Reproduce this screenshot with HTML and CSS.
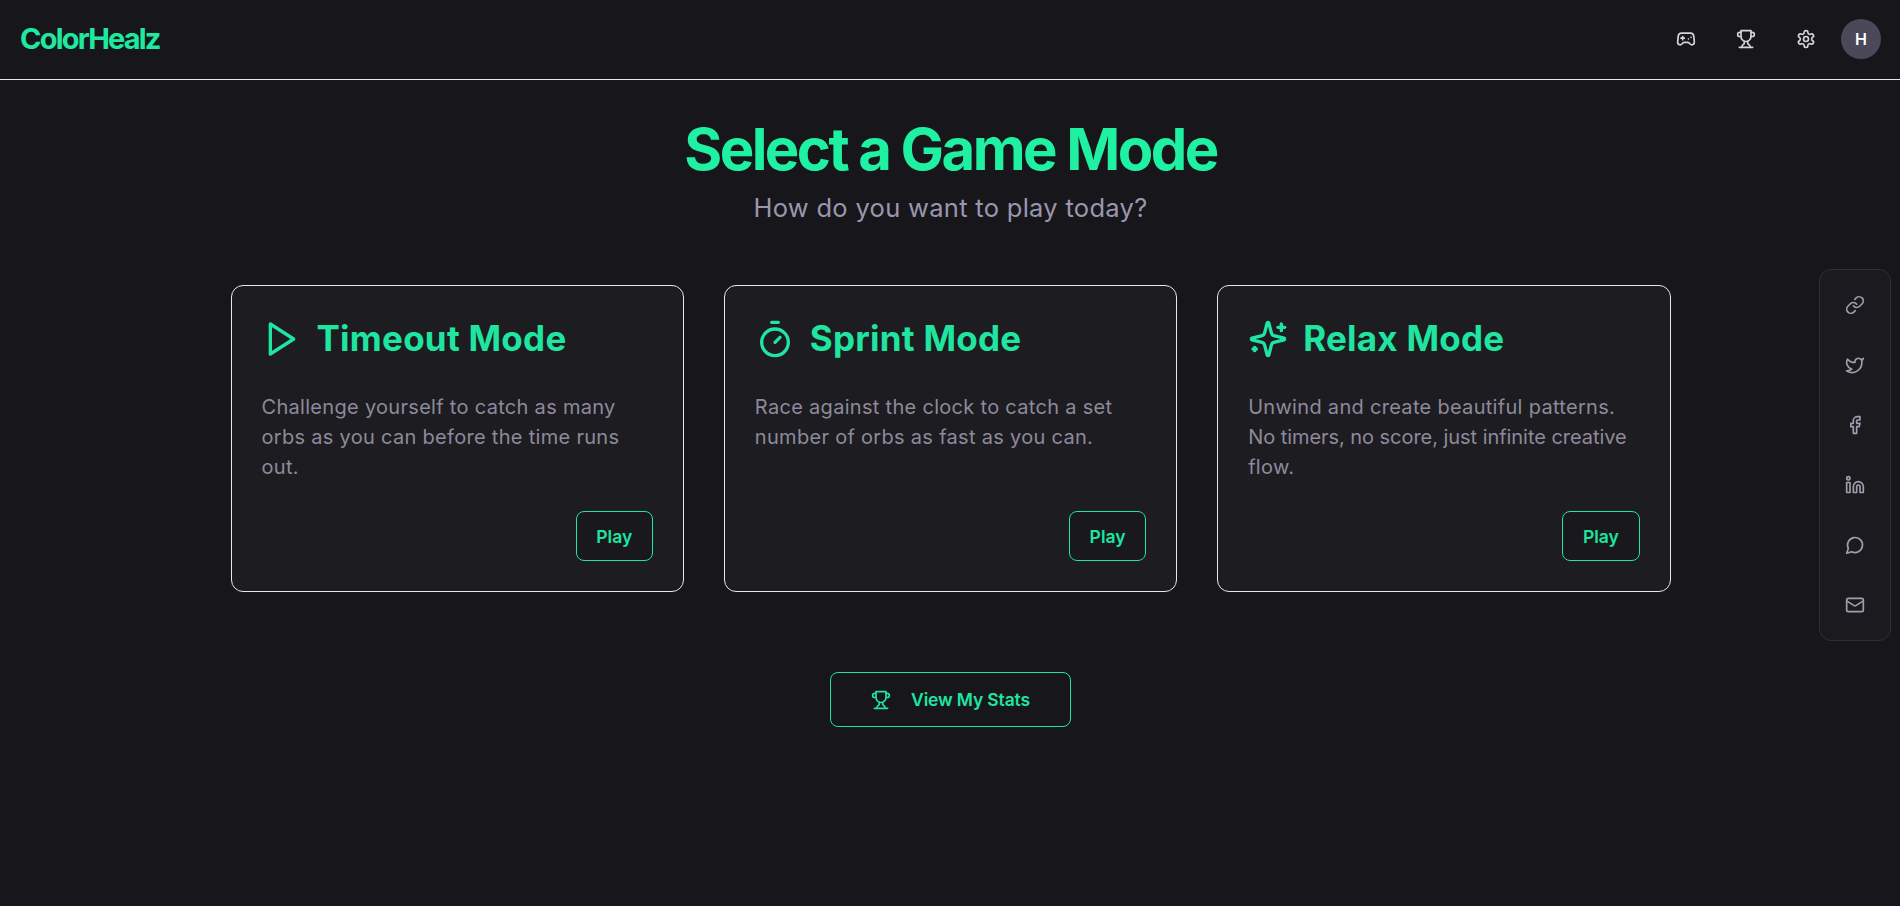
FILE: index.html
```html
<!DOCTYPE html>
<html lang="en">
<head>
<meta charset="utf-8">
<title>ColorHealz</title>
<link rel="stylesheet" href="styles.css">
</head>
<body>
<svg class="sprite" width="0" height="0" aria-hidden="true">
  <symbol id="i-trophy" viewBox="0 0 24 24"><path d="M6 9H4.5a2.5 2.5 0 0 1 0-5H6"/><path d="M18 9h1.5a2.5 2.5 0 0 0 0-5H18"/><path d="M4 22h16"/><path d="M10 14.66V17c0 .55-.47.98-.97 1.21C7.85 18.75 7 20.24 7 22"/><path d="M14 14.66V17c0 .55.47.98.97 1.21C16.15 18.75 17 20.24 17 22"/><path d="M18 2H6v7a6 6 0 0 0 12 0V2Z"/></symbol>
</svg>
<header class="topbar">
  <a class="logo">ColorHealz</a>
  <nav class="topnav">
    <button class="navbtn"><svg class="icon i20" viewBox="0 0 24 24"><line x1="6" x2="10" y1="11" y2="11"/><line x1="8" x2="8" y1="9" y2="13"/><line x1="15" x2="15.01" y1="12" y2="12"/><line x1="18" x2="18.01" y1="10" y2="10"/><path d="M17.32 5H6.68a4 4 0 0 0-3.978 3.59c-.006.052-.01.101-.017.152C2.604 9.416 2 14.456 2 16a3 3 0 0 0 3 3c1 0 1.5-.5 2-1l1.414-1.414A2 2 0 0 1 9.828 16h4.344a2 2 0 0 1 1.414.586L17 18c.5.5 1 1 2 1a3 3 0 0 0 3-3c0-1.545-.604-6.584-.685-7.258-.007-.05-.011-.1-.017-.151A4 4 0 0 0 17.32 5z"/></svg></button>
    <button class="navbtn"><svg class="icon i20"><use href="#i-trophy"/></svg></button>
    <button class="navbtn"><svg class="icon i20" viewBox="0 0 24 24"><path d="M12.22 2h-.44a2 2 0 0 0-2 2v.18a2 2 0 0 1-1 1.73l-.43.25a2 2 0 0 1-2 0l-.15-.08a2 2 0 0 0-2.73.73l-.22.38a2 2 0 0 0 .73 2.73l.15.1a2 2 0 0 1 1 1.72v.51a2 2 0 0 1-1 1.74l-.15.09a2 2 0 0 0-.73 2.73l.22.38a2 2 0 0 0 2.73.73l.15-.08a2 2 0 0 1 2 0l.43.25a2 2 0 0 1 1 1.73V20a2 2 0 0 0 2 2h.44a2 2 0 0 0 2-2v-.18a2 2 0 0 1 1-1.73l.43-.25a2 2 0 0 1 2 0l.15.08a2 2 0 0 0 2.73-.73l.22-.39a2 2 0 0 0-.73-2.73l-.15-.08a2 2 0 0 1-1-1.74v-.5a2 2 0 0 1 1-1.74l.15-.09a2 2 0 0 0 .73-2.73l-.22-.38a2 2 0 0 0-2.73-.73l-.15.08a2 2 0 0 1-2 0l-.43-.25a2 2 0 0 1-1-1.73V4a2 2 0 0 0-2-2z"/><circle cx="12" cy="12" r="3"/></svg></button>
    <div class="avatar">H</div>
  </nav>
</header>

<main class="page">
  <h1 class="title">Select a Game Mode</h1>
  <p class="subtitle">How do you want to play today?</p>

  <section class="modes">
    <article class="card">
      <div class="card-head">
        <svg class="icon i40" viewBox="0 0 24 24"><polygon points="5 3 19 12 5 21 5 3"/></svg>
        <h2 class="card-title">Timeout Mode</h2>
      </div>
      <p class="card-text">Challenge yourself to catch as many orbs as you can before the time runs out.</p>
      <div class="card-foot"><button class="play">Play</button></div>
    </article>
    <article class="card">
      <div class="card-head">
        <svg class="icon i40" viewBox="0 0 24 24"><line x1="10" x2="14" y1="2" y2="2"/><line x1="12" x2="15" y1="14" y2="11"/><circle cx="12" cy="14" r="8"/></svg>
        <h2 class="card-title">Sprint Mode</h2>
      </div>
      <p class="card-text">Race against the clock to catch a set number of orbs as fast as you can.</p>
      <div class="card-foot"><button class="play">Play</button></div>
    </article>
    <article class="card">
      <div class="card-head">
        <svg class="icon i40" viewBox="0 0 24 24"><path d="M9.937 15.5A2 2 0 0 0 8.5 14.063l-6.135-1.582a.5.5 0 0 1 0-.962L8.5 9.936A2 2 0 0 0 9.937 8.5l1.582-6.135a.5.5 0 0 1 .963 0L14.063 8.5A2 2 0 0 0 15.5 9.937l6.135 1.581a.5.5 0 0 1 0 .964L15.5 14.063a2 2 0 0 0-1.437 1.437l-1.582 6.135a.5.5 0 0 1-.963 0z"/><path d="M20 3v4"/><path d="M22 5h-4"/><path d="M4 17v2"/><path d="M5 18H3"/></svg>
        <h2 class="card-title">Relax Mode</h2>
      </div>
      <p class="card-text">Unwind and create beautiful patterns. <span class="tight">No timers, no score, just infinite creative</span> flow.</p>
      <div class="card-foot"><button class="play">Play</button></div>
    </article>
  </section>

  <button class="stats"><svg class="icon i20"><use href="#i-trophy"/></svg><span>View My Stats</span></button>
</main>

<aside class="dock">
  <a class="dock-item"><svg class="icon i20" viewBox="0 0 24 24"><path d="M10 13a5 5 0 0 0 7.54.54l3-3a5 5 0 0 0-7.07-7.07l-1.72 1.71"/><path d="M14 11a5 5 0 0 0-7.54-.54l-3 3a5 5 0 0 0 7.07 7.07l1.71-1.71"/></svg></a>
  <a class="dock-item"><svg class="icon i20" viewBox="0 0 24 24"><path d="M22 4s-.7 2.1-2 3.4c1.6 10-9.4 17.3-18 11.6 2.2.1 4.4-.6 6-2C3 15.5.5 9.6 3 5c2.2 2.6 5.6 4.1 9 4-.9-4.2 4-6.6 7-3.8 1.1 0 3-1.2 3-1.2z"/></svg></a>
  <a class="dock-item"><svg class="icon i20" viewBox="0 0 24 24"><path d="M18 2h-3a5 5 0 0 0-5 5v3H7v4h3v8h4v-8h3l1-4h-4V7a1 1 0 0 1 1-1h3z"/></svg></a>
  <a class="dock-item"><svg class="icon i20" viewBox="0 0 24 24"><path d="M16 8a6 6 0 0 1 6 6v7h-4v-7a2 2 0 0 0-2-2 2 2 0 0 0-2 2v7h-4v-7a6 6 0 0 1 6-6z"/><rect width="4" height="12" x="2" y="9"/><circle cx="4" cy="4" r="2"/></svg></a>
  <a class="dock-item"><svg class="icon i20" viewBox="0 0 24 24"><path d="M7.9 20A9 9 0 1 0 4 16.1L2 22Z"/></svg></a>
  <a class="dock-item"><svg class="icon i20" viewBox="0 0 24 24"><rect width="20" height="16" x="2" y="4" rx="2"/><path d="m22 7-8.97 5.7a1.94 1.94 0 0 1-2.06 0L2 7"/></svg></a>
</aside>
</body>
</html>
```

FILE: styles.css
```css
* { box-sizing: border-box; }
html, body { margin: 0; height: 100%; }
body {
  background: #16161b;
  color: #fff;
  font-family: "Inter", "Liberation Sans", sans-serif;
  overflow: hidden;
}
.sprite { position: absolute; }
.icon {
  fill: none;
  stroke: currentColor;
  stroke-width: 2;
  stroke-linecap: round;
  stroke-linejoin: round;
  flex: none;
  display: block;
}
.i20 { width: 20px; height: 20px; }
.i40 { width: 40px; height: 40px; }

.topbar {
  height: 80px;
  border-bottom: 1px solid #e8e8ea;
  padding: 0 19px 1px 20px;
  display: flex;
  align-items: center;
  justify-content: space-between;
}
.logo {
  margin-top: -2px;
  font-size: 29px;
  font-weight: 700;
  letter-spacing: -1.8px;
  color: #1fe9a0;
}
.topnav { display: flex; align-items: center; gap: 20px; }
.navbtn {
  width: 40px;
  height: 40px;
  padding: 0;
  background: none;
  border: 0;
  color: #d6d6da;
  display: flex;
  align-items: center;
  justify-content: center;
}
.avatar {
  width: 40px;
  height: 40px;
  margin-left: -5px;
  border-radius: 50%;
  background: #4b4859;
  color: #fff;
  font-size: 16px;
  font-weight: 600;
  display: flex;
  align-items: center;
  justify-content: center;
}

.page {
  padding: 39px 0 0 1px;
  display: flex;
  flex-direction: column;
  align-items: center;
}
.title {
  margin: 0;
  font-size: 58px;
  line-height: 60px;
  font-weight: 700;
  letter-spacing: -2.55px;
  color: #1ff0a1;
}
.subtitle {
  margin: 13px 0 0;
  font-size: 25.5px;
  line-height: 32px;
  letter-spacing: 0.3px;
  color: #9a96ad;
}
.modes {
  margin-top: 61px;
  width: 1440px;
  display: grid;
  grid-template-columns: repeat(3, 1fr);
  gap: 40px;
}
.card {
  height: 307px;
  padding: 30px;
  background: #1d1c21;
  border: 1px solid #e8e8ea;
  border-radius: 12px;
  display: flex;
  flex-direction: column;
}
.card-head { display: flex; align-items: center; gap: 15px; height: 45px; color: #1fe5a0; }
.card-title {
  margin: 0;
  font-size: 35px;
  line-height: 45px;
  font-weight: 700;
  letter-spacing: 0.25px;
}
.card-text {
  margin: 31px 0 0;
  font-size: 20px;
  line-height: 30px;
  letter-spacing: 0.3px;
  color: #8d8a9b;
}
.tight { letter-spacing: -0.05px; }
.card-foot { margin-top: auto; display: flex; justify-content: flex-end; }
.play {
  width: 77.2px;
  height: 50px;
  background: #18181d;
  border: 1px solid #1fe5a0;
  border-radius: 8px;
  color: #1fe5a0;
  font: 600 17.5px "Inter", "Liberation Sans", sans-serif;
}
.stats {
  margin-top: 80px;
  height: 55px;
  padding: 0 40px;
  background: none;
  border: 1px solid #1fe5a0;
  border-radius: 8px;
  color: #1fe5a0;
  font: 600 17.5px "Inter", "Liberation Sans", sans-serif;
  letter-spacing: -0.15px;
  display: flex;
  align-items: center;
  gap: 20px;
}
.dock {
  position: fixed;
  top: 269px;
  right: 9px;
  width: 72px;
  padding: 15px;
  background: #1b1a1f;
  border: 1px solid #302f36;
  border-radius: 12px;
  display: flex;
  flex-direction: column;
  gap: 20px;
}
.dock-item {
  width: 40px;
  height: 40px;
  color: #a09dac;
  display: flex;
  align-items: center;
  justify-content: center;
}
```
